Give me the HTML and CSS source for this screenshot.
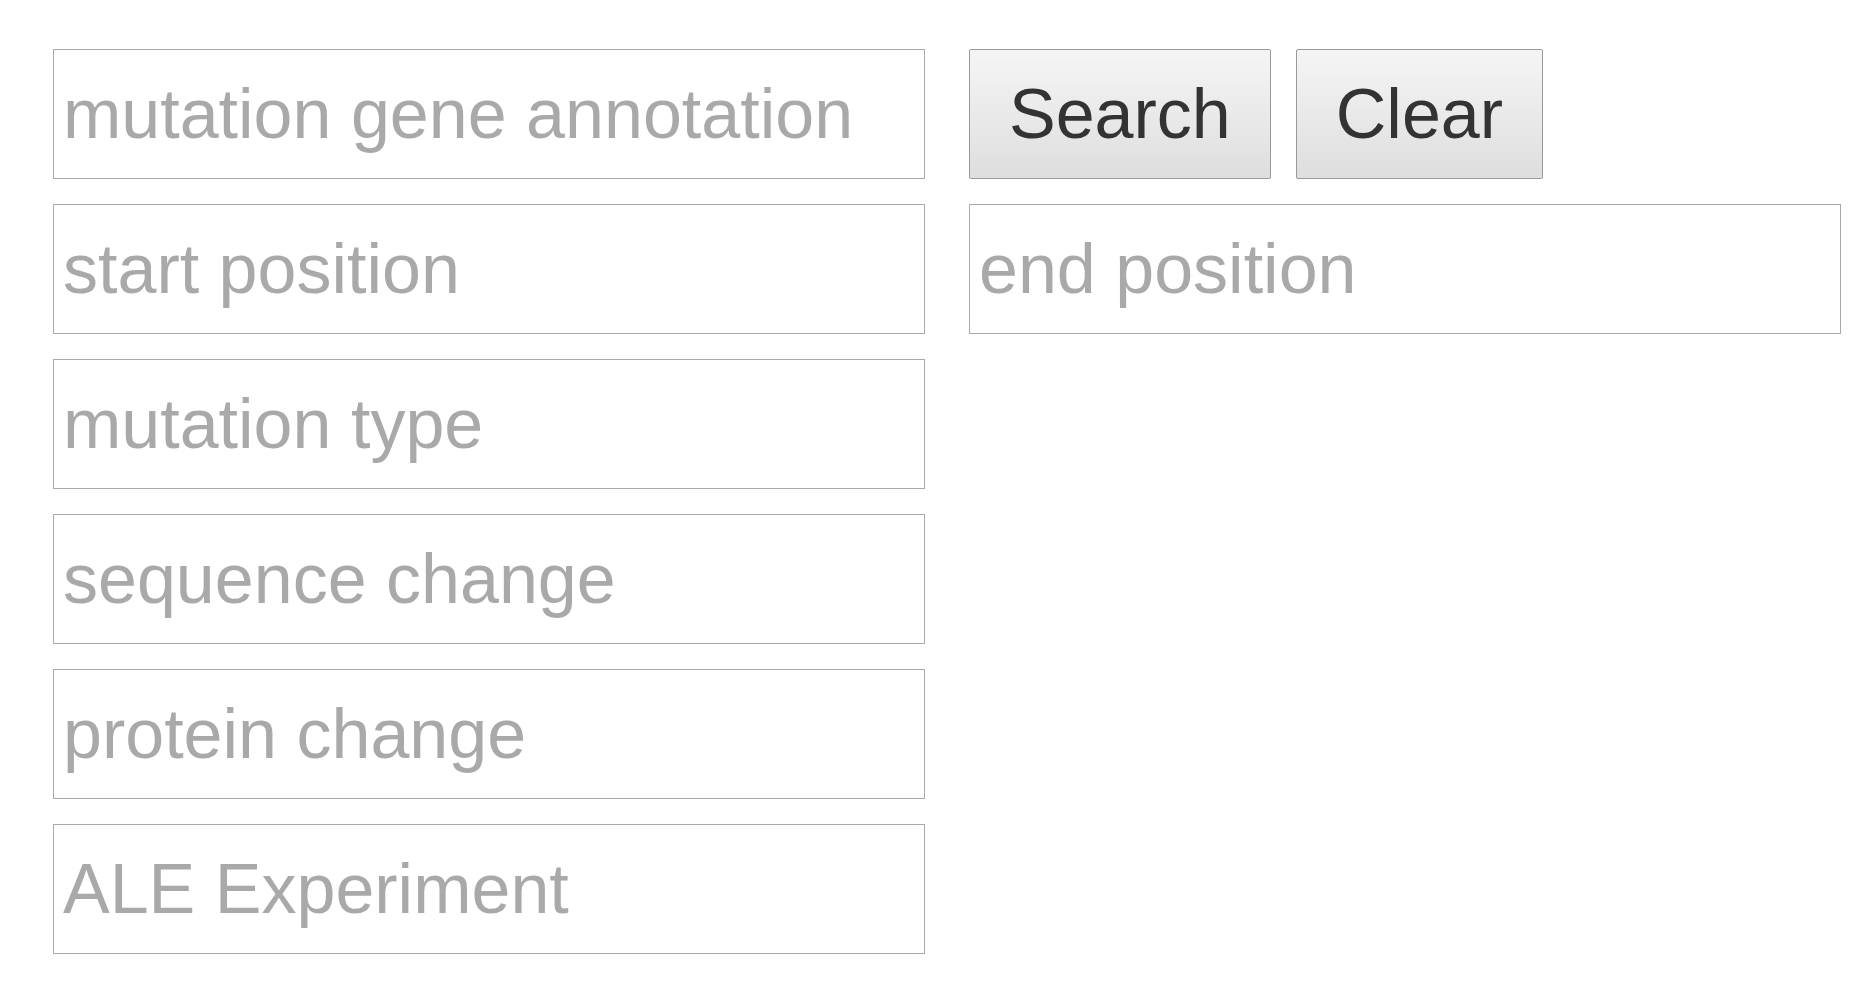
FILE: index.html
```html
<!DOCTYPE html>
<html lang="en">
<head>
<meta charset="utf-8">
<title>Mutation search</title>
<link rel="stylesheet" href="styles.css">
</head>
<body>
<form class="search-form">
  <input class="field" type="text" placeholder="mutation gene annotation">
  <div class="actions">
    <button class="btn" type="button">Search</button>
    <button class="btn" type="button">Clear</button>
  </div>
  <input class="field" type="text" placeholder="start position">
  <input class="field" type="text" placeholder="end position">
  <input class="field" type="text" placeholder="mutation type">
  <div class="empty"></div>
  <input class="field" type="text" placeholder="sequence change">
  <div class="empty"></div>
  <input class="field" type="text" placeholder="protein change">
  <div class="empty"></div>
  <input class="field" type="text" placeholder="ALE Experiment">
</form>
</body>
</html>
```

FILE: styles.css
```css
html, body {
  margin: 0;
  padding: 0;
  background: #ffffff;
}

body {
  font-family: "Liberation Sans", Arial, sans-serif;
  padding: 49px 0 0 53px;
}

.search-form {
  display: grid;
  grid-template-columns: 872px 872px;
  grid-auto-rows: 130px;
  column-gap: 44px;
  row-gap: 25px;
}

.field {
  box-sizing: border-box;
  width: 872px;
  height: 130px;
  margin: 0;
  padding: 0 9px;
  border: 1px solid #aaaaaa;
  border-radius: 0;
  background: #ffffff;
  font-family: "Liberation Sans", Arial, sans-serif;
  font-size: 70px;
  color: #333333;
  outline: none;
}

.field::placeholder {
  color: #a9a9a9;
  opacity: 1;
}

.actions {
  display: flex;
  gap: 25px;
}

.btn {
  box-sizing: border-box;
  height: 130px;
  margin: 0;
  padding: 0 39px;
  border: 1px solid #999999;
  border-radius: 2px;
  background: linear-gradient(to bottom, #f5f5f5 0%, #dedede 100%);
  font-family: "Liberation Sans", Arial, sans-serif;
  font-size: 70px;
  color: #333333;
  cursor: pointer;
}
```
